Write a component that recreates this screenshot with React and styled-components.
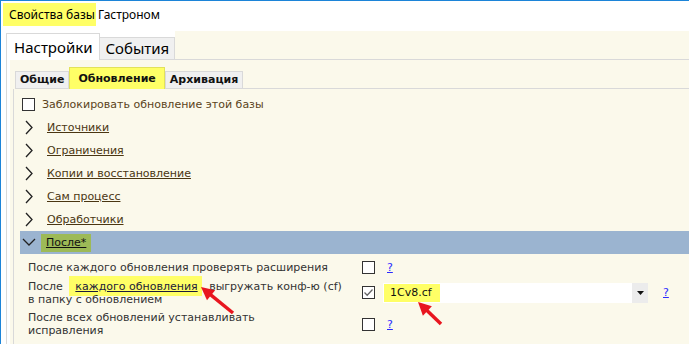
import React from "react";
import styled, { createGlobalStyle } from "styled-components";

const GlobalStyle = createGlobalStyle`
  html, body {
    margin: 0;
    padding: 0;
    background: #fff;
  }
  body {
    font-family: "DejaVu Sans", "Liberation Sans", sans-serif;
  }
  * {
    box-sizing: border-box;
  }
`;

const CREAM = "#fbf9eb";
const LINE = "#d9d9d9";

const Window = styled.div`
  position: relative;
  width: 689px;
  height: 344px;
  overflow: hidden;
  display: flex;
  flex-direction: column;
  background: #fff;
  border-top: 1px solid #1c84d8;
  border-left: 1px solid #1c84d8;
`;

const TitleBar = styled.div`
  height: 30px;
  flex-shrink: 0;
  padding: 2px 0 0 2px;
`;

const Title = styled.div`
  display: inline-block;
  height: 23px;
  line-height: 23px;
  padding-left: 6px;
  font-family: "Noto Sans", sans-serif;
  font-size: 12px;
  color: #000;
  background: linear-gradient(#ffff66, #ffff66) no-repeat;
  background-size: 93px 100%;
`;

const TabStrip = styled.div`
  display: flex;
  align-items: flex-end;
  height: 29px;
  flex-shrink: 0;
  padding-left: 5px;
`;

const TopTab = styled.div`
  height: ${(p) => (p.$active ? "27px" : "23px")};
  line-height: ${(p) => (p.$active ? "26px" : "21px")};
  padding: 0 ${(p) => (p.$active ? "7px" : "5px")};
  font-family: "Noto Sans", sans-serif;
  font-size: 15px;
  color: #000;
  background: ${(p) => (p.$active ? "#fff" : "#f0f0f0")};
  border: 1px solid ${LINE};
  border-left: ${(p) => (p.$active ? `1px solid ${LINE}` : "none")};
  border-bottom: ${(p) => (p.$active ? "none" : `1px solid ${LINE}`)};
`;

const TabFiller = styled.div`
  flex: 1;
  align-self: stretch;
  background: ${(p) => p.$bg || CREAM};
  border-bottom: 1px solid ${LINE};
`;

const Panel = styled.div`
  flex: 1;
  display: flex;
  margin-left: 5px;
  padding-left: 3px;
  background: #fff;
  border-left: 1px solid ${LINE};
`;

const Cream = styled.div`
  flex: 1;
  display: flex;
  flex-direction: column;
  padding-top: 7px;
  background: ${CREAM};
`;

const SubTabStrip = styled.div`
  display: flex;
  align-items: flex-end;
  height: 22px;
  padding-left: 5px;
`;

const SubTab = styled.div`
  height: ${(p) => (p.$active ? "22px" : "18px")};
  line-height: ${(p) => (p.$active ? "21px" : "16px")};
  padding: 0 ${(p) => (p.$active ? "8px" : "4px")};
  font-size: 11px;
  font-weight: bold;
  color: #111;
  background: ${(p) => (p.$active ? "#ffff66" : "#f0f0f0")};
  border: 1px solid ${(p) => (p.$active ? "#e2e25a" : LINE)};
  border-bottom: ${(p) => (p.$active ? "none" : `1px solid ${LINE}`)};
`;

const SubPanel = styled.div`
  flex: 1;
  margin-left: 3px;
  padding-top: 4px;
  border-left: 1px solid ${LINE};
`;

const CheckRow = styled.div`
  display: flex;
  align-items: center;
  gap: 7px;
  height: 23px;
  padding-left: 8px;
  font-size: 11px;
  color: #5a4320;
`;

const Box = styled.span`
  display: inline-flex;
  align-items: center;
  justify-content: center;
  width: 13px;
  height: 13px;
  flex-shrink: 0;
  background: #fff;
  border: 1px solid #333;
`;

const GroupRow = styled.div`
  display: flex;
  align-items: center;
  height: 23px;
  padding-left: 10px;
`;

const GroupLink = styled.a`
  margin-left: 13px;
  font-size: 11px;
  color: #4a3612;
  text-decoration: underline;
`;

const Bar = styled.div`
  display: flex;
  align-items: center;
  height: 23px;
  margin-left: 6px;
  padding-left: 2px;
  background: #9bb4d0;
`;

const BarLabel = styled.span`
  display: inline-flex;
  align-items: center;
  height: 18px;
  margin-left: 5px;
  padding: 0 5px;
  font-size: 11px;
  color: #111;
  text-decoration: underline;
  background: #9dba57;
`;

const Details = styled.div`
  padding: 4px 0 0 14px;
  font-size: 11px;
  color: #333;
`;

const OptionRow = styled.div`
  display: flex;
  align-items: center;
  height: ${(p) => p.$h}px;
  margin-bottom: ${(p) => p.$mb || 0}px;
`;

const OptionLabel = styled.div`
  width: 334px;
  flex-shrink: 0;
  line-height: 13px;
  white-space: nowrap;
`;

const CheckCell = styled.div`
  width: 21px;
  flex-shrink: 0;
  display: flex;
`;

const Help = styled.a`
  margin-left: ${(p) => p.$ml || 4}px;
  font-size: 11px;
  color: #2a2aff;
  text-decoration: underline;
`;

const Marked = styled.a`
  margin: 0 4px 0 3px;
  padding: 4px 4px 3px 6px;
  color: #1b1b3a;
  text-decoration: underline;
  background: #ffff66;
`;

const Field = styled.div`
  display: flex;
  align-items: center;
  width: 265px;
  height: 20px;
  background: #fff;
`;

const FieldValue = styled.span`
  display: inline-flex;
  align-items: center;
  height: 18px;
  margin-left: 1px;
  padding: 0 8px 0 6px;
  font-size: 11px;
  color: #111;
  background: #ffff66;
`;

const DropButton = styled.span`
  margin-left: auto;
  width: 16px;
  height: 20px;
  display: flex;
  align-items: center;
  justify-content: center;
  background: #ececec;
`;

const Overlay = styled.svg`
  position: absolute;
  left: 0;
  top: 0;
  pointer-events: none;
`;

const Chevron = ({ down }) =>
  down ? (
    <svg width="14" height="9" viewBox="0 0 14 9">
      <path d="M1 1 L7 7 L13 1" fill="none" stroke="#222" strokeWidth="1.3" />
    </svg>
  ) : (
    <svg width="10" height="15" viewBox="0 0 10 15">
      <path d="M2 1 L8 7.5 L2 14" fill="none" stroke="#222" strokeWidth="1.3" />
    </svg>
  );

const Check = () => (
  <svg width="11" height="11" viewBox="0 0 11 11">
    <path d="M1.5 5.5 L4.2 8.2 L9.5 2.5" fill="none" stroke="#666" strokeWidth="1.3" />
  </svg>
);

const Arrow = ({ x1, y1, x2, y2 }) => {
  const dx = x2 - x1;
  const dy = y2 - y1;
  const len = Math.hypot(dx, dy);
  const ux = dx / len;
  const uy = dy / len;
  const bx = x2 - ux * 13;
  const by = y2 - uy * 13;
  const nx = -uy * 6.5;
  const ny = ux * 6.5;
  return (
    <g fill="#e8161f" stroke="#e8161f">
      <line x1={x1} y1={y1} x2={bx + ux * 2} y2={by + uy * 2} strokeWidth="3.5" />
      <polygon
        points={`${x2},${y2} ${bx + nx},${by + ny} ${bx - nx},${by - ny}`}
        stroke="none"
      />
    </g>
  );
};

const groups = ["Источники", "Ограничения", "Копии и восстановление", "Сам процесс", "Обработчики"];

export default function App() {
  return (
    <>
      <GlobalStyle />
      <Window>
        <TitleBar>
          <Title>Свойства базы Гастроном</Title>
        </TitleBar>
        <TabStrip>
          <TopTab $active>Настройки</TopTab>
          <TopTab>События</TopTab>
          <TabFiller />
        </TabStrip>
        <Panel>
          <Cream>
            <SubTabStrip>
              <SubTab>Общие</SubTab>
              <SubTab $active>Обновление</SubTab>
              <SubTab>Архивация</SubTab>
              <TabFiller $bg="transparent" />
            </SubTabStrip>
            <SubPanel>
              <CheckRow>
                <Box />
                Заблокировать обновление этой базы
              </CheckRow>
              {groups.map((g) => (
                <GroupRow key={g}>
                  <Chevron />
                  <GroupLink>{g}</GroupLink>
                </GroupRow>
              ))}
              <Bar>
                <Chevron down />
                <BarLabel>После*</BarLabel>
              </Bar>
              <Details>
                <OptionRow $h={18} $mb={3}>
                  <OptionLabel>После каждого обновления проверять расширения</OptionLabel>
                  <CheckCell>
                    <Box />
                  </CheckCell>
                  <Help>?</Help>
                </OptionRow>
                <OptionRow $h={27} $mb={5}>
                  <OptionLabel>
                    <div>
                      После <Marked>каждого обновления</Marked> выгружать конф-ю (cf)
                    </div>
                    <div>в папку с обновлением</div>
                  </OptionLabel>
                  <CheckCell>
                    <Box>
                      <Check />
                    </Box>
                  </CheckCell>
                  <Field>
                    <FieldValue>1Cv8.cf</FieldValue>
                    <DropButton>
                      <svg width="7" height="4" viewBox="0 0 7 4">
                        <path d="M0 0 H7 L3.5 4 Z" fill="#111" />
                      </svg>
                    </DropButton>
                  </Field>
                  <Help $ml={15}>?</Help>
                </OptionRow>
                <OptionRow $h={26}>
                  <OptionLabel>
                    <div>После всех обновлений устанавливать</div>
                    <div>исправления</div>
                  </OptionLabel>
                  <CheckCell>
                    <Box />
                  </CheckCell>
                  <Help>?</Help>
                </OptionRow>
              </Details>
            </SubPanel>
          </Cream>
        </Panel>
        <Overlay width="689" height="344">
          <Arrow x1={232} y1={312} x2={200} y2={286} />
          <Arrow x1={440} y1={323} x2={417} y2={301} />
        </Overlay>
      </Window>
    </>
  );
}
